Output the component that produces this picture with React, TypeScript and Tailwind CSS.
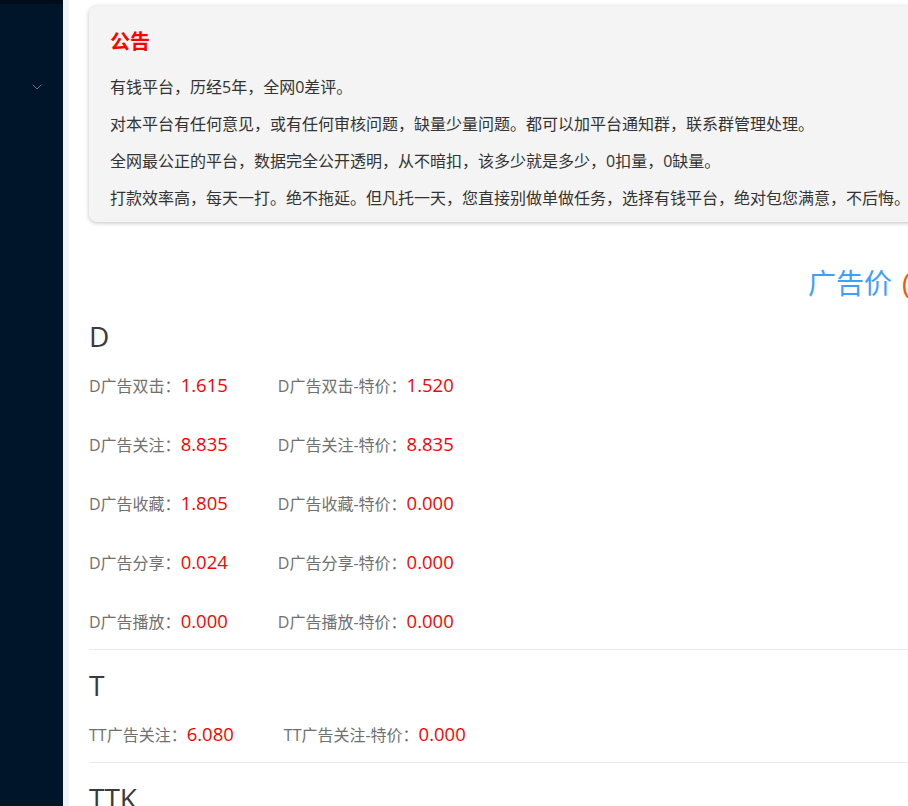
import { ChevronDown } from 'lucide-react';

const NOTICE = [
  '有钱平台，历经5年，全网0差评。',
  '对本平台有任何意见，或有任何审核问题，缺量少量问题。都可以加平台通知群，联系群管理处理。',
  '全网最公正的平台，数据完全公开透明，从不暗扣，该多少就是多少，0扣量，0缺量。',
  '打款效率高，每天一打。绝不拖延。但凡托一天，您直接别做单做任务，选择有钱平台，绝对包您满意，不后悔。',
];

type Price = { label: string; value: string };
type Group = { name: string; rows: Price[][] };

const GROUPS: Group[] = [
  {
    name: 'D',
    rows: [
      [{ label: 'D广告双击：', value: '1.615' }, { label: 'D广告双击-特价：', value: '1.520' }],
      [{ label: 'D广告关注：', value: '8.835' }, { label: 'D广告关注-特价：', value: '8.835' }],
      [{ label: 'D广告收藏：', value: '1.805' }, { label: 'D广告收藏-特价：', value: '0.000' }],
      [{ label: 'D广告分享：', value: '0.024' }, { label: 'D广告分享-特价：', value: '0.000' }],
      [{ label: 'D广告播放：', value: '0.000' }, { label: 'D广告播放-特价：', value: '0.000' }],
    ],
  },
  {
    name: 'T',
    rows: [[{ label: 'TT广告关注：', value: '6.080' }, { label: 'TT广告关注-特价：', value: '0.000' }]],
  },
  { name: 'TTK', rows: [] },
];

function Sidebar() {
  return (
    <aside className="w-[63px] shrink-0 bg-[#001529] flex flex-col">
      <div className="h-1 bg-[#000c17]" />
      <div className="mt-[75px] h-4 flex justify-end pr-[18px]">
        <ChevronDown size={16} strokeWidth={1.2} className="text-[#8c939b]" />
      </div>
    </aside>
  );
}

export default function App() {
  return (
    <div
      className="flex h-[806px] w-[908px] overflow-hidden bg-white"
      style={{ fontFamily: '"Open Sans", "Noto Sans CJK SC", sans-serif' }}
    >
      <Sidebar />
      <div className="w-[6px] shrink-0 bg-[#f0f2f5]" />
      <main className="flex-1 min-w-0 pl-[20px] pt-[6px]">
        <div className="w-[1200px]">
          <section className="rounded-[8px] bg-[#f4f4f4] shadow-[0_1px_4px_rgba(0,0,0,0.25)] pl-[21px] pt-[24px] pb-[5px]">
            <h3 className="text-[20px] leading-[24px] font-bold text-[#ff0000]">公告</h3>
            <div className="mt-[15px] text-[16px] leading-[37px] text-[#333333]">
              {NOTICE.map((line) => (
                <p key={line}>{line}</p>
              ))}
            </div>
          </section>

          <h2 className="mt-[41px] pl-[719px] text-[28px] leading-[40px] text-[#409eff] whitespace-nowrap">
            广告价<span className="ml-[10px] text-[#ff5500]">(</span>
          </h2>

          <div>
            {GROUPS.map((g, gi) => (
              <div key={g.name} className={gi > 0 ? 'border-t border-[#ebebeb] pt-[15px]' : 'pt-[13px]'}>
                <div className="text-[28px] leading-[40px] text-[#3a3a3a]">{g.name}</div>
                <div className="pt-[16px] pb-[15px]">
                  {g.rows.map((row, ri) => (
                    <div key={ri} className={`flex gap-[50px] items-baseline ${ri > 0 ? 'mt-[33px]' : ''}`}>
                      {row.map((p) => (
                        <div key={p.label} className="flex items-baseline whitespace-nowrap">
                          <span className="text-[16px] text-[#707070]">{p.label}</span>
                          <span className="text-[18.5px] leading-[26px] text-[#ff0000]">{p.value}</span>
                        </div>
                      ))}
                    </div>
                  ))}
                </div>
              </div>
            ))}
          </div>
        </div>
      </main>
    </div>
  );
}
